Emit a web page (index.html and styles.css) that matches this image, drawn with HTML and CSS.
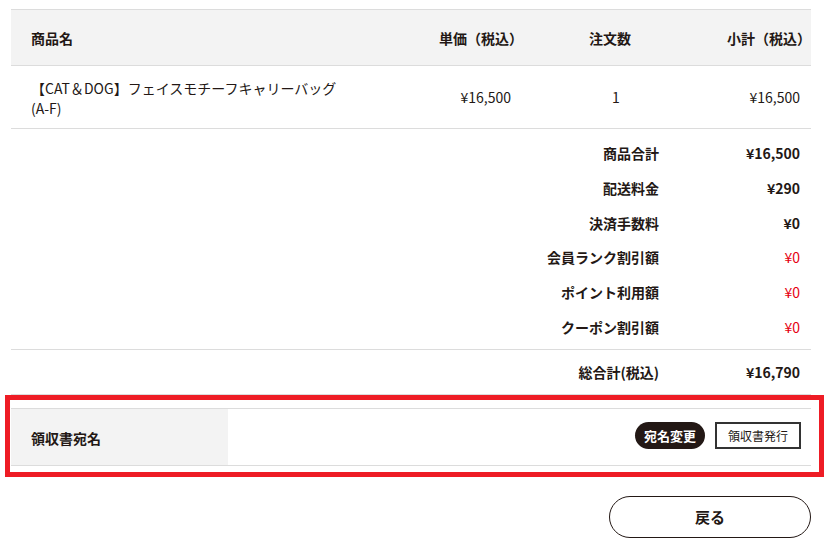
FILE: index.html
```html
<!DOCTYPE html>
<html lang="ja">
<head>
<meta charset="utf-8">
<link rel="stylesheet" href="styles.css">
</head>
<body>
<div class="wrap">
  <div class="order">
    <div class="grid head">
      <div class="c-name">商品名</div>
      <div class="c-price">単価（税込）</div>
      <div class="c-qty">注文数</div>
      <div class="c-sub">小計（税込）</div>
    </div>
    <div class="grid item">
      <div class="c-name">【CAT＆DOG】フェイスモチーフキャリーバッグ<br>(A-F)</div>
      <div class="c-price">¥16,500</div>
      <div class="c-qty">1</div>
      <div class="c-sub">¥16,500</div>
    </div>
    <div class="summary">
      <div class="s-row"><span class="s-label">商品合計</span><span class="s-val">¥16,500</span></div>
      <div class="s-row"><span class="s-label">配送料金</span><span class="s-val">¥290</span></div>
      <div class="s-row"><span class="s-label">決済手数料</span><span class="s-val">¥0</span></div>
      <div class="s-row"><span class="s-label">会員ランク割引額</span><span class="s-val red">¥0</span></div>
      <div class="s-row"><span class="s-label">ポイント利用額</span><span class="s-val red">¥0</span></div>
      <div class="s-row"><span class="s-label">クーポン割引額</span><span class="s-val red">¥0</span></div>
    </div>
    <div class="total">
      <div class="s-row"><span class="s-label">総合計(税込)</span><span class="s-val">¥16,790</span></div>
    </div>
  </div>

  <div class="receipt">
    <div class="r-label">領収書宛名</div>
    <div class="r-actions">
      <button class="btn-dark">宛名変更</button>
      <button class="btn-outline">領収書発行</button>
    </div>
  </div>

  <div class="back-row">
    <button class="btn-back">戻る</button>
  </div>
</div>
<div class="highlight"></div>
</body>
</html>
```

FILE: styles.css
```css
* { box-sizing: border-box; }
html, body { margin: 0; padding: 0; background: #fff; }
body {
  font-family: "Noto Sans CJK JP", "Noto Sans", sans-serif;
  color: #231815;
  font-size: 14px;
}
.wrap {
  padding: 9px 16px 0 11px;
  width: 827px;
}
.grid {
  display: grid;
  grid-template-columns: 1fr 120px 174px 114px;
  align-items: center;
  padding-left: 20px;
}
.head {
  height: 57px;
  background: #f3f3f3;
  border-top: 1px solid #dcdcdc;
  border-bottom: 1px solid #dcdcdc;
  font-weight: bold;
}
.head .c-price, .head .c-sub { text-align: right; }
.head .c-qty { text-align: center; }
.item {
  height: 63px;
  border-bottom: 1px solid #dcdcdc;
  line-height: 20px;
}
.item .c-name { padding-top: 2px; }
.item .c-price { text-align: right; padding-right: 12px; }
.item .c-qty { text-align: center; padding-left: 12px; }
.item .c-sub { text-align: right; padding-right: 11px; }

.summary {
  padding: 7px 11px 5px 0;
  border-bottom: 1px solid #dcdcdc;
}
.s-row {
  display: grid;
  grid-template-columns: 1fr 140px;
  align-items: center;
  height: 34.67px;
  font-weight: bold;
}
.s-label { text-align: right; padding-right: 1px; }
.s-val { text-align: right; }
.s-val.red { color: #e60012; font-weight: normal; }
.total {
  height: 45px;
  padding: 5px 11px 5px 0;
  border-bottom: 1px solid #dcdcdc;
}

.receipt {
  margin-top: 13px;
  display: flex;
  height: 58px;
  border-top: 1px solid #dcdcdc;
  border-bottom: 1px solid #dcdcdc;
}
.r-label {
  width: 217px;
  background: #f3f3f3;
  padding-left: 20px;
  display: flex;
  align-items: center;
  font-weight: bold;
  padding-top: 2px;
}
.r-actions {
  flex: 1;
  display: flex;
  justify-content: flex-end;
  align-items: center;
  gap: 10px;
  padding-right: 10px;
  padding-bottom: 3px;
}
button {
  font-family: inherit;
  cursor: pointer;
  margin: 0;
}
.btn-dark {
  height: 27px;
  width: 70px;
  border: none;
  border-radius: 14px;
  background: #231815;
  color: #fff;
  font-weight: bold;
  font-size: 13px;
  padding: 0;
}
.btn-outline {
  height: 27px;
  width: 86px;
  border: 2px solid #333;
  background: #fff;
  color: #231815;
  font-size: 12px;
  padding: 0;
}
.back-row {
  margin-top: 30px;
  display: flex;
  justify-content: flex-end;
}
.btn-back {
  width: 202px;
  height: 42px;
  border: 1px solid #231815;
  border-radius: 21px;
  background: #fff;
  color: #231815;
  font-weight: bold;
  font-size: 15px;
}
.highlight {
  position: absolute;
  left: 5px;
  top: 395px;
  width: 819px;
  height: 82px;
  border: 5px solid #ee1c25;
  pointer-events: none;
}
```
